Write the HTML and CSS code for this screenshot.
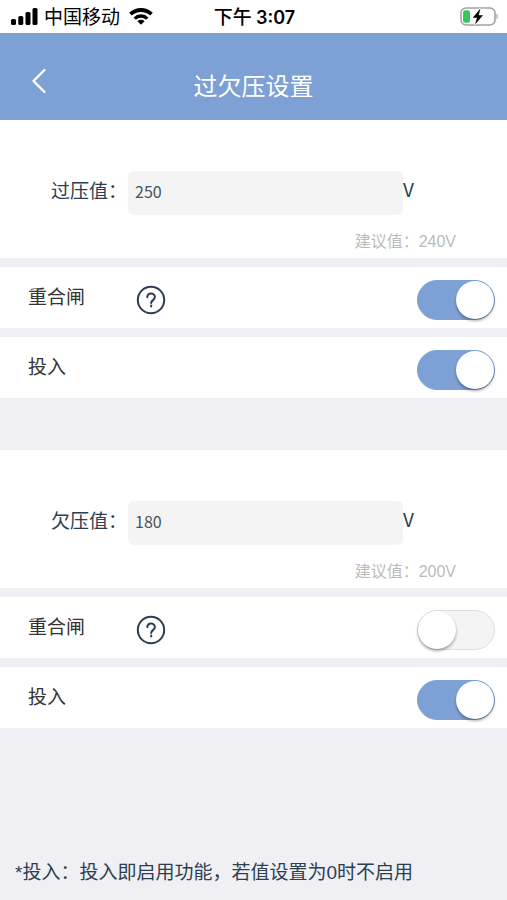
FILE: index.html
```html
<!DOCTYPE html>
<html lang="zh-CN">
<head>
<meta charset="utf-8">
<meta name="viewport" content="width=device-width, initial-scale=1">
<title>过欠压设置</title>
<link rel="stylesheet" href="styles.css">
</head>
<body>
<div class="status">
  <div class="status-left">
    <svg class="signal" width="28" height="17" viewBox="0 0 28 17" aria-hidden="true">
      <rect x="0" y="11" width="5" height="6" rx="1.6"/>
      <rect x="7.300" y="8" width="5" height="9" rx="1.6"/>
      <rect x="14.500" y="4" width="5" height="13" rx="1.6"/>
      <rect x="21.500" y="0" width="5" height="17" rx="1.6"/>
    </svg>
    <span>中国移动</span>
    <svg class="wifi" width="24" height="17" viewBox="0 0 24 17" aria-hidden="true">
      <path d="M1.500 6.200C7.300.6 16.700.6 22.500 6.200" fill="none" stroke="#000" stroke-width="3.800"/>
      <path d="M5.700 10.600c3.500-3.400 9.100-3.400 12.600 0" fill="none" stroke="#000" stroke-width="3.400"/>
      <path d="M8.400 13.200c2-2 5.200-2 7.200 0L12 16.800z"/>
    </svg>
  </div>
  <div class="time">下午 <b>3:07</b></div>
  <div class="status-right">
    <svg width="38" height="20" viewBox="0 0 38 20" aria-hidden="true">
      <rect x="1" y="1" width="34" height="17" rx="5" fill="#fff" stroke="#a2a2a2" stroke-width="1.6"/>
      <path d="M36.500 6.500c1.600.8 1.600 5.200 0 6z" fill="#999"/>
      <rect x="3" y="3.200" width="7" height="12.600" rx="2.500" fill="#34c759"/>
      <path d="M20.500 1.500L12.700 10.700H17L15 17.500L23 8.300H18.700z" fill="#000" stroke="#fff" stroke-width="1.600" paint-order="stroke"/>
    </svg>
  </div>
</div>

<header class="header">
  <button class="back" type="button" aria-label="返回">
    <svg width="16" height="26" viewBox="0 0 16 26" aria-hidden="true">
      <path d="M13.500 2L2.500 13L13.500 24" fill="none" stroke="#fff" stroke-width="2.400" stroke-linecap="round" stroke-linejoin="round"/>
    </svg>
  </button>
  <h1>过欠压设置</h1>
</header>

<main>
  <section class="group">
    <div class="card">
      <div class="field">
        <label for="over">过压值：</label>
        <input id="over" type="text" inputmode="numeric" value="250">
        <span class="unit">V</span>
      </div>
      <p class="hint">建议值：240V</p>
    </div>
    <div class="row">
      <label for="over-reclose">重合闸</label>
      <button class="help" type="button" aria-label="帮助">
        <svg width="30" height="30" viewBox="0 0 30 30" aria-hidden="true">
          <circle cx="15" cy="15" r="13.200"/>
          <path d="M11.300 12.300c0-5 7.600-4.900 7.600-.3 0 3-3.700 3.200-3.700 6"/>
          <path d="M15.200 20.600v1"/>
        </svg>
      </button>
      <input class="switch" id="over-reclose" type="checkbox" checked>
    </div>
    <div class="row">
      <label for="over-enable">投入</label>
      <input class="switch" id="over-enable" type="checkbox" checked>
    </div>
  </section>

  <section class="group">
    <div class="card">
      <div class="field">
        <label for="under">欠压值：</label>
        <input id="under" type="text" inputmode="numeric" value="180">
        <span class="unit">V</span>
      </div>
      <p class="hint">建议值：200V</p>
    </div>
    <div class="row">
      <label for="under-reclose">重合闸</label>
      <button class="help" type="button" aria-label="帮助">
        <svg width="30" height="30" viewBox="0 0 30 30" aria-hidden="true">
          <circle cx="15" cy="15" r="13.200"/>
          <path d="M11.300 12.300c0-5 7.600-4.900 7.600-.3 0 3-3.700 3.200-3.700 6"/>
          <path d="M15.200 20.600v1"/>
        </svg>
      </button>
      <input class="switch" id="under-reclose" type="checkbox">
    </div>
    <div class="row">
      <label for="under-enable">投入</label>
      <input class="switch" id="under-enable" type="checkbox" checked>
    </div>
  </section>
</main>

<footer class="note">*投入：投入即启用功能，若值设置为0时不启用</footer>
</body>
</html>
```
FILE: styles.css
```css
* {
  box-sizing: border-box;
}

body {
  margin: 0;
  min-height: 100vh;
  display: flex;
  flex-direction: column;
  background: #efeff4;
  color: #2c3e50;
  font-family: "Liberation Sans", "Noto Sans CJK SC", sans-serif;
  font-size: 19px;
  line-height: 28px;
}

button {
  padding: 0;
  border: 0;
  background: none;
}

svg {
  display: block;
}

.status {
  display: grid;
  grid-template-columns: 1fr auto 1fr;
  align-items: center;
  height: 33px;
  padding: 0 9px 0 11px;
  background: #fff;
  color: #000;
}

.status-left {
  display: flex;
  align-items: center;
  gap: 5px;
}

.status-left span {
  padding-top: 2px;
}

.wifi {
  margin-left: 4px;
}

.status-right {
  justify-self: end;
}

.time {
  font-weight: 500;
  font-family: "Noto Sans CJK SC", sans-serif;
}

.time b {
  font-family: Inter, sans-serif;
  font-size: 18px;
  font-weight: 600;
}

.header {
  display: grid;
  grid-template-columns: 47px 1fr 47px;
  align-items: center;
  height: 87px;
  padding-top: 20px;
  background: #7ea1d5;
  color: #fff;
}

.back {
  justify-self: end;
  padding-bottom: 12px;
}

.header h1 {
  margin: 0;
  font-size: 24px;
  font-weight: 400;
  line-height: 36px;
  text-align: center;
}

.group {
  display: grid;
  gap: 9px;
}

.group + .group {
  margin-top: 52px;
}

.card {
  height: 138px;
  padding: 51px 51px 0;
  background: #fff;
}

.field {
  display: grid;
  grid-template-columns: 77px 1fr 53px;
  line-height: 38px;
}

.field label {
  padding-top: 2px;
}

.field input {
  width: 100%;
  height: 44px;
  padding: 0 7px 4px;
  border: 0;
  border-radius: 6px;
  background: #f4f4f4;
  color: #4a535e;
  font-family: "Noto Sans CJK SC", sans-serif;
  font-size: 16px;
}

.unit {
  line-height: 36px;
  font-family: "Noto Sans CJK SC", sans-serif;
}

.hint {
  margin: 13px 0 0;
  color: #bbb;
  font-size: 16px;
  line-height: 28px;
  text-align: right;
}

.row {
  display: flex;
  align-items: center;
  height: 61px;
  padding: 4px 12px 0 28px;
  background: #fff;
  color: #333;
}

.row label {
  width: 108px;
  padding-bottom: 3px;
}

.help svg {
  fill: none;
  stroke: #2c3e50;
  stroke-width: 2;
  stroke-linecap: round;
}

.switch {
  appearance: none;
  width: 78px;
  height: 40px;
  margin: 0 0 0 auto;
  border: 1px solid #dfdfdf;
  border-radius: 20px;
  background: #f4f4f4;
}

.switch::before {
  content: "";
  display: block;
  width: 38px;
  height: 38px;
  border-radius: 50%;
  background: #fff;
  box-shadow: 0 2px 3px rgba(0, 0, 0, 0.35);
}

.switch:checked {
  border-color: #7ea1d5;
  background: #7ea1d5;
}

.switch:checked::before {
  margin-left: auto;
}

.note {
  margin-top: auto;
  padding: 0 15px 13px;
}
```
